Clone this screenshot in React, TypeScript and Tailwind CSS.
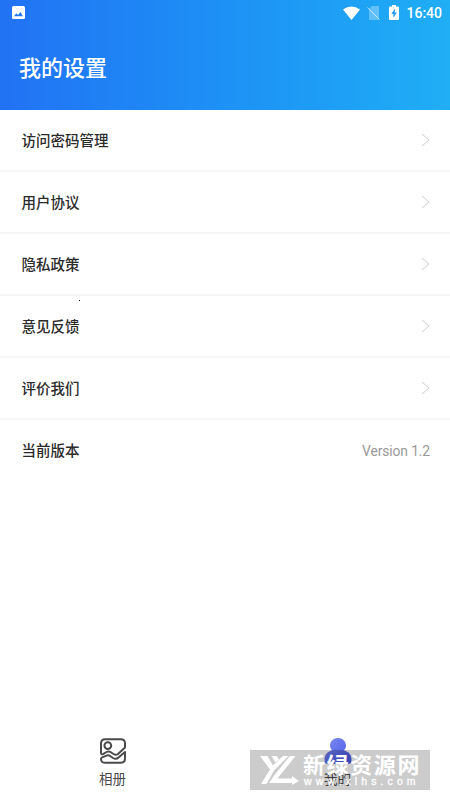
import clsx from "clsx";

const settings = [
  { label: "访问密码管理" },
  { label: "用户协议" },
  { label: "隐私政策" },
  { label: "意见反馈" },
  { label: "评价我们" },
  { label: "当前版本", value: "Version 1.2" },
];

function StatusBar() {
  return (
    <div className="flex h-[25px] items-center justify-between pl-3 pr-2 text-white">
      <svg className="h-[13px] w-[13px]" viewBox="0 0 13 13">
        <rect width="13" height="13" rx="1.5" fill="white" />
        <path d="M2 10.3 4.3 7.3 6 9 8.4 6 11 10.3Z" fill="#2478f0" />
      </svg>
      <div className="flex items-center">
        <svg className="h-[14px] w-[17px]" viewBox="0 0 17 14">
          <path d="M0 3.6Q8.5-2.8 17 3.6L8.5 14Z" fill="white" />
        </svg>
        <svg className="ml-[7px] h-[14px] w-[14px]" viewBox="0 0 14 14">
          <path d="M5 0H12V14H2V3Z" fill="white" fillOpacity="0.3" />
          <path d="M.5 1.5 12.5 13.5" stroke="white" strokeOpacity="0.6" />
        </svg>
        <svg className="ml-2 h-[15px] w-[10px]" viewBox="0 0 10 15">
          <path d="M3 0H7V1.5H9Q10 1.5 10 2.5V14Q10 15 9 15H1Q0 15 0 14V2.5Q0 1.5 1 1.5H3Z" fill="white" />
          <path d="M6 3.5 2.3 9H4.4V13L7.8 7.5H5.8Z" fill="#249df3" />
        </svg>
        <span className="ml-[7px] text-[14px] font-medium leading-[16px]">16:40</span>
      </div>
    </div>
  );
}

function SettingRow({ label, value, last }: { label: string; value?: string; last: boolean }) {
  return (
    <div className={clsx("flex h-[62px] items-center justify-between pl-[21.5px] pr-5", !last && "border-b-2 border-[#f6f6f6]")}>
      <span className={clsx("text-[14.5px] font-medium text-[#2b2b2b]", last ? "pt-px" : "pt-[3px]")}>{label}</span>
      {value ? (
        <span className="text-[13.8px] tracking-[-0.1px] text-[#999999]">{value}</span>
      ) : (
        <svg className="h-[14px] w-[9px]" viewBox="0 0 9 14" fill="none">
          <path d="M1 1 8 7 1 13" stroke="#cfcfcf" />
        </svg>
      )}
    </div>
  );
}

function AlbumIcon() {
  return (
    <svg className="h-[26px] w-[28px]" viewBox="0 0 28 26" fill="none" stroke="#4a4a4a" strokeWidth="2" strokeLinejoin="round">
      <path d="M2 15V5.5Q2 1.2 6.3 1.2H21.7Q26 1.2 26 5.5V9.5L19 16Q17 17.6 14.5 16L11.5 14Q9.5 12.8 7.5 14L4.5 15.8Q2.2 17 2 15Z" />
      <circle cx="8.8" cy="7.6" r="3.4" />
      <path d="M2 21Q2 19.8 3.2 19.3L7.5 17.6Q9.5 16.8 11.5 18.2L14 20Q17 21.8 19.5 19.5L26 14V20.5Q26 24.8 21.7 24.8H6Q2.2 24.8 2 21Z" />
    </svg>
  );
}

function ProfileIcon() {
  return (
    <svg className="h-[26px] w-[28px]" viewBox="0 0 28 26">
      <defs>
        <linearGradient id="profile" x1="0" y1="0" x2="1" y2="1">
          <stop offset="0" stopColor="#7d8cf0" />
          <stop offset="1" stopColor="#4653e4" />
        </linearGradient>
      </defs>
      <path d="M14 0C18.4 0 22 3.4 22 7.5C22 9.7 21 11.5 19.5 12.2C25 13.5 27.5 17 27.5 22Q27.5 26 24.5 26H3.5Q.5 26 .5 22C.5 17 3 13.5 8.5 12.2C7 11.5 6 9.7 6 7.5C6 3.4 9.6 0 14 0Z" fill="url(#profile)" />
    </svg>
  );
}

function Watermark() {
  return (
    <div className="absolute left-[250px] top-[750px] flex h-10 w-[180px] bg-black/20 text-white">
      <svg className="ml-[10px] mt-[5px] h-[30px] w-10 shrink-0" viewBox="0 0 40 30">
        <path d="M0 1H7.5L13 10.5 23 1H28.5L14 15.5 6.5 29H1L10 14.5Z" fill="white" />
        <path d="M11.5 1H16.5L19 4.5 15.5 7.5Z" fill="white" />
        <path d="M30 1H35.5L17.5 23.5H32V21L39 26 32 30V28H9L14.5 20Z" fill="white" />
      </svg>
      <div className="ml-[3px] w-[120px]">
        <div className="mt-[3px] whitespace-nowrap text-[22px] font-bold leading-[26px] tracking-[1.6px]">新绿资源网</div>
        <div className="mt-[-3px] whitespace-nowrap pl-px font-['Liberation_Sans',sans-serif] text-[10.5px] leading-[11px] tracking-[4.1px] [-webkit-text-stroke:0.3px_white]">www.xlhs.com</div>
      </div>
    </div>
  );
}

export default function App() {
  return (
    <div className="relative flex h-[800px] w-[450px] flex-col overflow-hidden bg-white font-[Roboto,'Noto_Sans_CJK_SC',sans-serif]">
      <header className="h-[110px] shrink-0 bg-linear-to-r from-[#2272f4] to-[#20aef5]">
        <StatusBar />
        <h1 className="mt-[28px] pl-[19px] text-[22px] font-medium leading-[32px] text-white">我的设置</h1>
      </header>

      <main className="relative flex-1">
        {settings.map((item, i) => (
          <SettingRow key={item.label} {...item} last={i === settings.length - 1} />
        ))}
        <span className="absolute left-[79px] top-[190px] h-px w-px bg-black" />
      </main>

      <nav className="grid h-[62px] shrink-0 grid-cols-2 text-[13.5px] leading-[18px] text-[#4a4a4a]">
        <div className="flex flex-col items-center gap-[6px]">
          <AlbumIcon />
          <span>相册</span>
        </div>
        <div className="flex flex-col items-center gap-[6px]">
          <ProfileIcon />
          <span>我的</span>
        </div>
      </nav>

      <Watermark />
    </div>
  );
}
